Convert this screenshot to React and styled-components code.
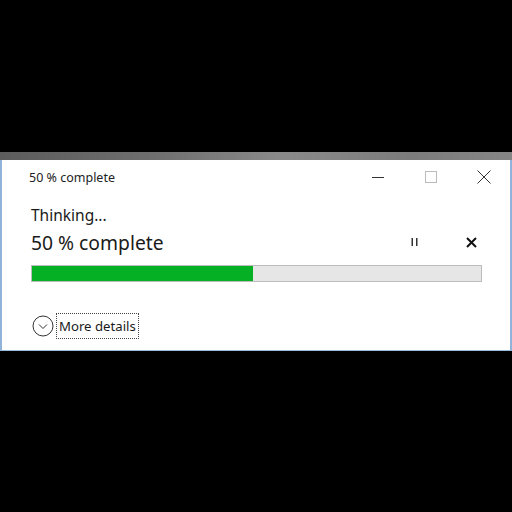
import React from "react";
import styled, { createGlobalStyle } from "styled-components";

const Global = createGlobalStyle`
  html, body { margin: 0; padding: 0; background: #000; }
  body { font-family: "Noto Sans", "Open Sans", sans-serif; }
`;

const Page = styled.div`
  width: 512px;
  height: 512px;
  background: #000;
  display: flex;
  flex-direction: column;
  padding-top: 152px;
  box-sizing: border-box;
`;

const Strip = styled.div`
  height: 8px;
  background: linear-gradient(90deg, #5c5c5c 0%, #6e6e6e 30%, #8a8a8a 55%, #7c7c7c 80%, #858585 100%);
`;

const Window = styled.div`
  height: 191px;
  background: #fff;
  border-left: 2px solid #8fb3d9;
  border-right: 2px solid #8fb3d9;
  border-bottom: 1px solid #9ab9db;
  box-sizing: border-box;
  display: flex;
  flex-direction: column;
`;

const TitleBar = styled.div`
  height: 34px;
  display: flex;
  align-items: center;
  padding-left: 27px;
`;

const TitleText = styled.div`
  flex: 1;
  font-size: 12.5px;
  color: #222;
`;

const CaptionButton = styled.div`
  width: 53px;
  height: 34px;
  display: flex;
  align-items: center;
  justify-content: center;
`;

const Body = styled.div`
  padding: 10px 28px 0 29px;
  display: flex;
  flex-direction: column;
`;

const Status = styled.div`
  font-size: 15.5px;
  color: #1a1a1a;
  line-height: 22px;
`;

const HeaderRow = styled.div`
  display: flex;
  align-items: center;
  height: 30px;
  margin-top: 1px;
`;

const Percent = styled.div`
  flex: 1;
  font-size: 19.3px;
  color: #1a1a1a;
`;

const IconButton = styled.div`
  width: ${(p) => p.w}px;
  display: flex;
  justify-content: center;
  align-items: center;
`;

const Track = styled.div`
  margin-top: 8px;
  height: 17px;
  background: #e6e6e6;
  border: 1px solid #bcbcbc;
  box-sizing: border-box;
  display: flex;
  width: 451px;
`;

const Fill = styled.div`
  background: #06b025;
  height: 100%;
`;

const Details = styled.div`
  margin-top: 31px;
  display: flex;
  align-items: center;
  gap: 2px;
  margin-left: 1px;
`;

const DetailsLabel = styled.div`
  font-size: 13.2px;
  color: #1a1a1a;
  border: 1px dotted #444;
  padding: 2px 2px 2px 2px;
  line-height: 20px;
`;

export default function App() {
  const pct = 50;
  return (
    <>
      <Global />
      <Page>
        <Strip />
        <Window>
          <TitleBar>
            <TitleText>50 % complete</TitleText>
            <CaptionButton>
              <svg width="12" height="12" viewBox="0 0 12 12">
                <line x1="0" y1="6.5" x2="12" y2="6.5" stroke="#333" strokeWidth="1" />
              </svg>
            </CaptionButton>
            <CaptionButton>
              <svg width="12" height="12" viewBox="0 0 12 12">
                <rect x="0.5" y="0.5" width="11" height="11" fill="none" stroke="#bbb" strokeWidth="1" />
              </svg>
            </CaptionButton>
            <CaptionButton>
              <svg width="14" height="14" viewBox="0 0 14 14">
                <path d="M0.5 0.5 L13.5 13.5 M13.5 0.5 L0.5 13.5" stroke="#333" strokeWidth="1" />
              </svg>
            </CaptionButton>
          </TitleBar>
          <Body>
            <Status>Thinking...</Status>
            <HeaderRow>
              <Percent>50 % complete</Percent>
              <IconButton w={90}>
                <svg width="8" height="10" viewBox="0 0 8 10">
                  <rect x="0.5" y="1" width="1.5" height="8" fill="#333" />
                  <rect x="5" y="1" width="1.5" height="8" fill="#333" />
                </svg>
              </IconButton>
              <IconButton w={22}>
                <svg width="11" height="11" viewBox="0 0 11 11">
                  <path d="M1 1 L10 10 M10 1 L1 10" stroke="#111" strokeWidth="2" />
                </svg>
              </IconButton>
            </HeaderRow>
            <Track>
              <Fill style={{ width: `${pct * 0.984}%` }} />
            </Track>
            <Details>
              <svg width="22" height="22" viewBox="0 0 22 22">
                <circle cx="11" cy="11" r="10" fill="none" stroke="#333" strokeWidth="1" />
                <path d="M7 9.5 L11 13.5 L15 9.5" fill="none" stroke="#333" strokeWidth="1" />
              </svg>
              <DetailsLabel>More details</DetailsLabel>
            </Details>
          </Body>
        </Window>
      </Page>
    </>
  );
}
